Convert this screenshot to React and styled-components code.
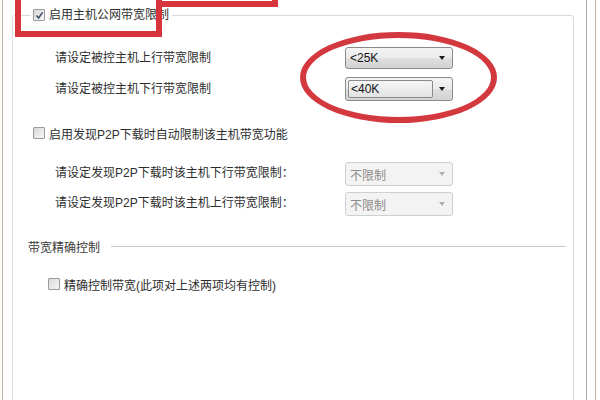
import React from "react";
import styled, { createGlobalStyle, css } from "styled-components";

const GlobalStyle = createGlobalStyle`
  html, body {
    margin: 0;
    padding: 0;
    background: #ffffff;
  }
  body {
    font-family: "Liberation Sans", "Noto Sans CJK SC", sans-serif;
    font-size: 12px;
    color: #2e2e2e;
  }
`;

const Stage = styled.div`
  position: relative;
  width: 600px;
  height: 400px;
  overflow: hidden;
  background: #fff;
`;

const Frame = styled.div`
  display: flex;
  box-sizing: border-box;
  width: 594px;
  height: 400px;
  margin-left: 2px;
  border-left: 1px solid #c2b2a2;
  border-right: 1px solid #c2b2a2;
  padding-right: 8px;
`;

const Panel = styled.div`
  flex: 1;
  box-sizing: border-box;
  padding: 0 12px 0 9px;
  border-right: 1px solid #a9a9a9;
  overflow: hidden;
`;

const GroupBox = styled.fieldset`
  margin: 7px 0 0;
  padding: 0;
  min-height: 420px;
  min-width: 0;
  border: 1px solid #dadada;
  border-radius: 3px;
`;

const Legend = styled.legend`
  display: flex;
  align-items: center;
  gap: 4px;
  margin-left: 18px;
  padding: 0 3px 0 2px;
  line-height: 16px;
  height: 16px;
`;

const Body = styled.div`
  display: flex;
  flex-direction: column;
`;

const Row = styled.div`
  display: flex;
  align-items: center;
  height: ${({ $h }) => $h}px;
  margin-top: ${({ $mt }) => $mt}px;
  padding-left: 42px;
`;

const Label = styled.span`
  width: 290px;
  white-space: nowrap;
  line-height: 16px;
  padding-bottom: ${({ $lift }) => ($lift ? 3 : 0)}px;
`;

const CheckRow = styled.div`
  display: flex;
  align-items: center;
  gap: 4px;
  height: 16px;
  margin-top: ${({ $mt }) => $mt}px;
  padding-left: ${({ $indent }) => $indent}px;
  white-space: nowrap;
`;

const Box = styled.span`
  display: inline-flex;
  align-items: center;
  justify-content: center;
  box-sizing: border-box;
  width: 12px;
  height: 12px;
  border: 1px solid #9a9a9a;
  border-radius: 1px;
  background: linear-gradient(135deg, #d8d8d8, #f7f7f7);
`;

const Heading = styled.div`
  display: flex;
  align-items: center;
  height: 16px;
  margin-top: 22px;
  padding-left: 15px;
  padding-right: 7px;
  white-space: nowrap;
  color: #3a3a3a;
`;

const Rule = styled.span`
  flex: 1;
  height: 1px;
  margin-left: 11px;
  background: #c9c9c9;
`;

const Combo = styled.div`
  position: relative;
  display: flex;
  align-items: center;
  box-sizing: border-box;
  width: 108px;
  height: ${({ $h }) => $h}px;
  border-radius: 3px;
  padding: 2px;
  ${({ $disabled }) =>
    $disabled
      ? css`
          border: 1px solid #cfcfcf;
          background: #f3f3f3;
          color: #8c8c8c;
        `
      : css`
          border: 1px solid #8a8a8a;
          background: linear-gradient(#f4f4f4 0%, #ececec 48%, #dfdfdf 52%, #d3d3d3 100%);
          color: #111;
        `}
`;

const ComboText = styled.span`
  flex: 1;
  height: 100%;
  display: flex;
  align-items: center;
  box-sizing: border-box;
  padding-left: 2px;
  font-size: 12px;
  ${({ $field }) =>
    $field &&
    css`
      border: 1px solid #8a8a8a;
      border-radius: 2px;
      background: linear-gradient(#f6f6f6, #e2e2e2);
      margin-right: 1px;
    `}
`;

const Arrow = styled.span`
  width: 16px;
  height: 100%;
  display: flex;
  align-items: center;
  justify-content: center;
  &::after {
    content: "";
    border-left: 3.5px solid transparent;
    border-right: 3.5px solid transparent;
    border-top: 4px solid ${({ $disabled }) => ($disabled ? "#b0b0b0" : "#1a1a1a")};
  }
`;

const RedRect = styled.div`
  position: absolute;
  left: ${({ $x }) => $x}px;
  top: ${({ $y }) => $y}px;
  width: ${({ $w }) => $w}px;
  height: ${({ $hh }) => $hh}px;
  box-sizing: border-box;
  border: 6px solid #d8343c;
`;

const RedEllipse = styled.div`
  position: absolute;
  left: 300px;
  top: 32px;
  width: 197px;
  height: 91px;
  box-sizing: border-box;
  border: 6px solid #d3383e;
  border-radius: 50%;
`;

function CheckBox({ checked }) {
  return (
    <Box>
      {checked && (
        <svg width="9" height="9" viewBox="0 0 9 9">
          <path d="M1.5 4.5 L3.6 7 L7.6 1.4" fill="none" stroke="#3f4d6a" strokeWidth="1.6" />
        </svg>
      )}
    </Box>
  );
}

function Select({ value, disabled, field, h }) {
  return (
    <Combo $disabled={disabled} $h={h}>
      <ComboText $field={field}>{value}</ComboText>
      <Arrow $disabled={disabled} />
    </Combo>
  );
}

export default function App() {
  return (
    <Stage>
      <GlobalStyle />
      <Frame>
        <Panel>
          <GroupBox>
            <Legend>
              <CheckBox checked />
              <span>启用主机公网带宽限制</span>
            </Legend>
            <Body>
              <Row $h={22} $mt={24}>
                <Label>请设定被控主机上行带宽限制</Label>
                <Select value="<25K" h={22} />
              </Row>
              <Row $h={24} $mt={8}>
                <Label>请设定被控主机下行带宽限制</Label>
                <Select value="<40K" field h={24} />
              </Row>
              <CheckRow $mt={24} $indent={20}>
                <CheckBox />
                <span>启用发现P2P下载时自动限制该主机带宽功能</span>
              </CheckRow>
              <Row $h={24} $mt={21}>
                <Label $lift>请设定发现P2P下载时该主机下行带宽限制：</Label>
                <Select value="不限制" disabled h={24} />
              </Row>
              <Row $h={24} $mt={6}>
                <Label $lift>请设定发现P2P下载时该主机上行带宽限制：</Label>
                <Select value="不限制" disabled h={24} />
              </Row>
              <Heading>
                <span>带宽精确控制</span>
                <Rule />
              </Heading>
              <CheckRow $mt={22} $indent={35}>
                <CheckBox />
                <span>精确控制带宽(此项对上述两项均有控制)</span>
              </CheckRow>
            </Body>
          </GroupBox>
        </Panel>
      </Frame>
      <RedRect $x={15} $y={-12} $w={147} $hh={49} />
      <RedRect $x={156} $y={-20} $w={122} $hh={27} />
      <RedEllipse />
    </Stage>
  );
}
